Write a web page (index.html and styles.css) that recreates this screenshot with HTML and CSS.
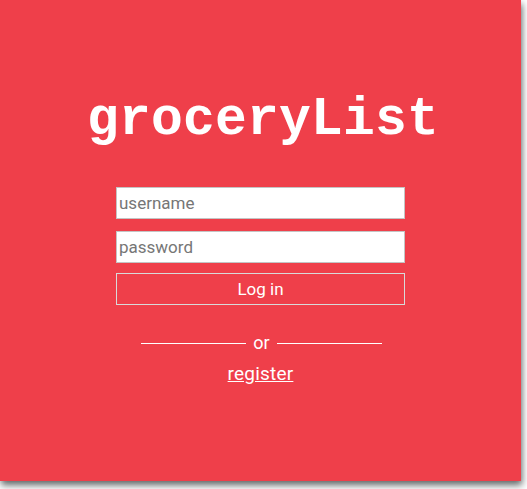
FILE: index.html
```html
<!DOCTYPE html>
<html>
<head>
<meta charset="utf-8">
<link rel="stylesheet" href="styles.css">
</head>
<body>
<div class="panel">
  <h1 class="title">groceryList</h1>
  <form class="form">
    <input class="field" type="text" placeholder="username">
    <input class="field" type="password" placeholder="password">
    <button class="btn" type="button">Log in</button>
  </form>
  <div class="divider"><span class="line"></span><span class="or">or</span><span class="line"></span></div>
  <a class="register" href="#">register</a>
</div>
</body>
</html>
```
FILE: styles.css
```css
html, body {
  margin: 0;
  padding: 0;
  background: #ffffff;
}
body {
  min-height: 489px;
}
.panel {
  width: 521px;
  height: 481px;
  background: #ef3f4a;
  box-shadow: 1px 4px 7px rgba(40, 50, 50, 0.75);
  display: flex;
  flex-direction: column;
  align-items: center;
  font-family: Roboto, "Liberation Sans", sans-serif;
  color: #fff;
}
.title {
  margin: 92px 0 0 0;
  font-family: "Liberation Mono", "Courier New", monospace;
  font-weight: bold;
  font-size: 53px;
  line-height: 56px;
  letter-spacing: 0.2px;
  padding-left: 5px;
}
.form {
  margin-top: 39px;
  width: 289px;
  display: flex;
  flex-direction: column;
  gap: 12px;
}
.field {
  box-sizing: border-box;
  height: 32px;
  margin: 0;
  border: 1px solid #c4c4c4;
  background: #fff;
  padding: 0 2px;
  font-family: Roboto, "Liberation Sans", sans-serif;
  font-size: 17px;
  color: #333;
  outline: none;
}
.field::placeholder {
  color: #767676;
}
.btn {
  box-sizing: border-box;
  height: 32px;
  margin-top: -2px;
  border: 1px solid #d9d9d9;
  background: transparent;
  color: #fff;
  font-family: Roboto, "Liberation Sans", sans-serif;
  font-size: 17px;
  padding: 0;
}
.divider {
  margin-top: 28px;
  display: flex;
  align-items: center;
  gap: 7px;
  padding-left: 2px;
}
.line {
  display: block;
  width: 105px;
  height: 1px;
  background: #fff;
}
.or {
  font-size: 18px;
  line-height: 20px;
}
.register {
  margin-top: 10px;
  color: #fff;
  font-size: 19px;
  line-height: 22px;
  letter-spacing: 0.2px;
  text-decoration: underline;
}
```
